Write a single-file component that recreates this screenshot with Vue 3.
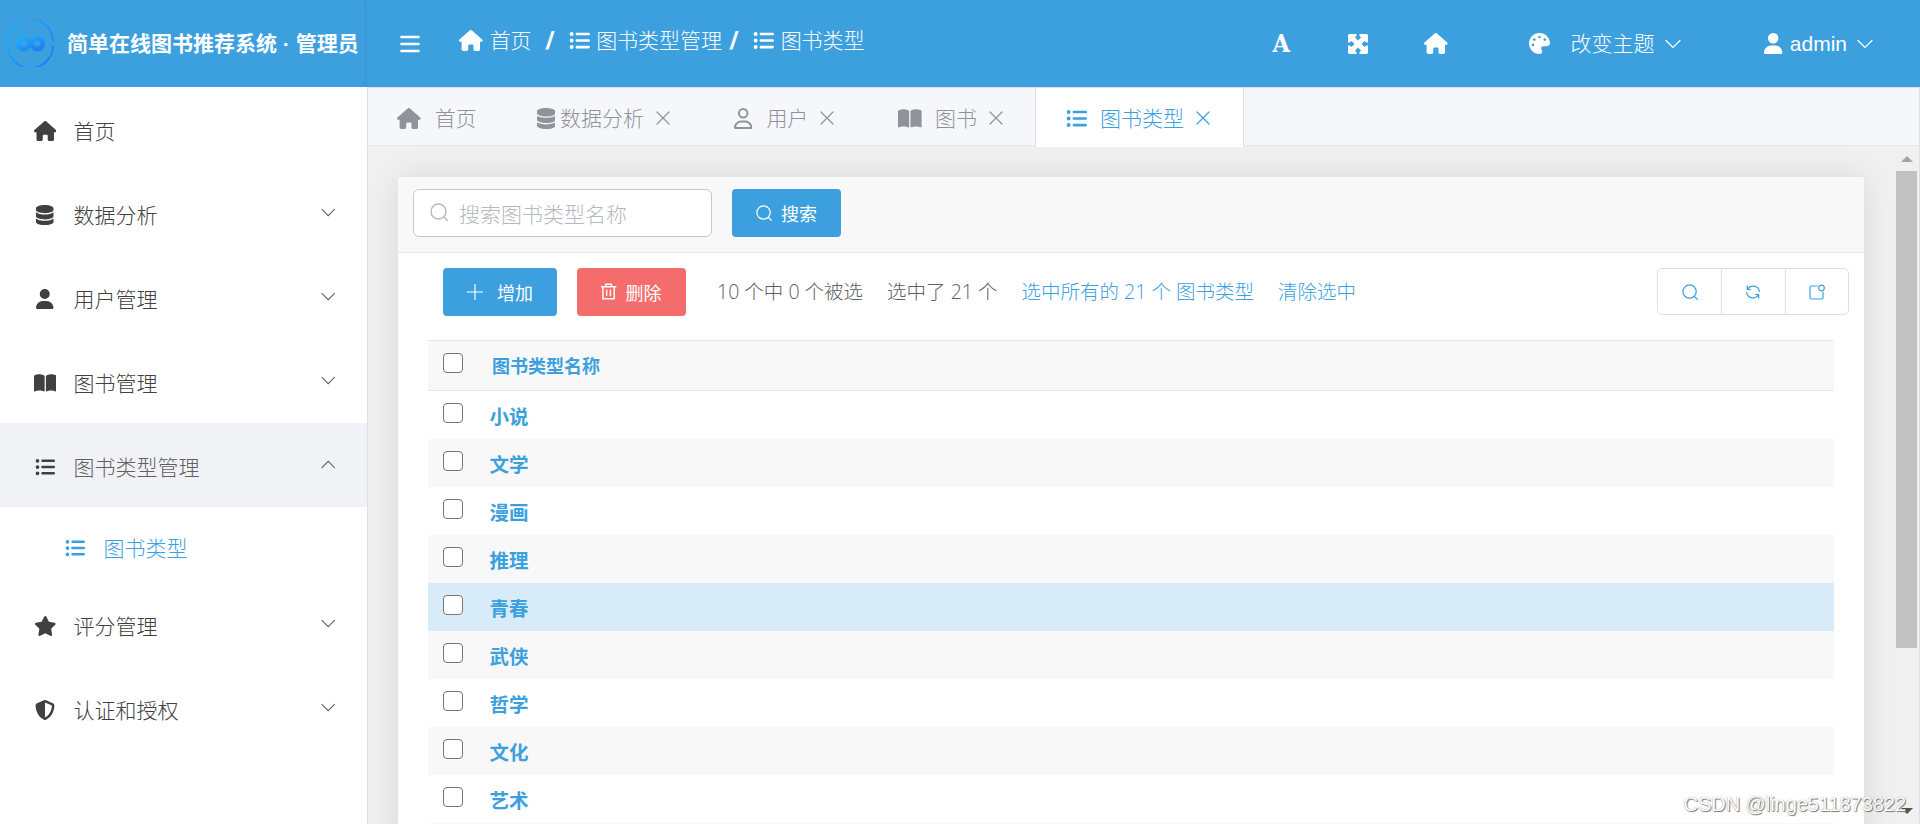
<template>
    <div class="app">
        <aside class="sidebar">
            <div class="brand">
                <svg class="logo" viewBox="0 0 46 46">
                    <defs>
                        <linearGradient id="brand-gradient" x1="0" y1="0" x2="1" y2="1">
                            <stop offset="0" stop-color="#1cb2f8" />
                            <stop offset="1" stop-color="#1e7bf5" />
                        </linearGradient>
                    </defs>
                    <g fill="none" stroke="url(#brand-gradient)">
                        <path d="M1 21a22 22 0 0 1 44 0M1 25a22 22 0 0 0 44 0" stroke-width="2" />
                        <path
                            d="M23 23c-2.6-3.6-4.3-5.5-6.5-5.5a5.500 5.500 0 0 0 0 11c2.600 0 4.300-2.400 6.500-5.500s4-5.500 6.500-5.500a5.500 5.500 0 0 1 0 11c-2.300 0-4-1.900-6.500-5.500"
                            stroke-width="4.600"
                        />
                    </g>
                </svg>
                <span class="brand-name">简单在线图书推荐系统 · 管理员</span>
            </div>
            <nav class="menu">
                <template v-for="item in menus" :key="item.name">
                    <div class="menu-item" :class="{ opened: item.children }">
                        <span class="menu-icon"><Icon :name="item.icon" /></span>
                        <span>{{ item.name }}</span>
                        <Icon v-if="item.arrow" class="menu-arrow" :name="item.children ? 'up' : 'down'" />
                    </div>
                    <div v-for="child in item.children" :key="child.name" class="menu-item sub-item">
                        <span class="menu-icon"><Icon :name="child.icon" /></span>
                        <span>{{ child.name }}</span>
                    </div>
                </template>
            </nav>
        </aside>

        <section class="main">
            <header class="navbar">
                <Icon class="hamburger" name="bars" />
                <div class="breadcrumb">
                    <Icon name="home" />
                    <span class="crumb first">首页</span>
                    <b class="slash wide">/</b>
                    <Icon name="list" />
                    <span class="crumb">图书类型管理</span>
                    <b class="slash">/</b>
                    <Icon name="list" />
                    <span class="crumb">图书类型</span>
                </div>
                <div class="nav-tools">
                    <span class="tool-font">A</span>
                    <Icon class="tool-expand" name="expand" />
                    <Icon class="tool-home" name="home" />
                    <Icon class="tool-theme" name="palette" />
                    <span class="theme-text">改变主题</span>
                    <Icon class="nav-arrow" name="down" />
                    <Icon class="tool-user" name="user" />
                    <span class="user-name">admin</span>
                    <Icon class="nav-arrow" name="down" />
                </div>
            </header>

            <div class="tabs">
                <div
                    v-for="tab in tabs"
                    :key="tab.name"
                    class="tab"
                    :class="{ active: tab.active, tight: tab.icon === 'database' }"
                >
                    <Icon :name="tab.icon" />
                    <span class="tab-name">{{ tab.name }}</span>
                    <Icon v-if="tab.closable" class="tab-close" name="close" />
                </div>
            </div>

            <div class="content">
                <div class="card">
                    <div class="search-bar">
                        <div class="search-input">
                            <Icon name="search" />
                            <span>搜索图书类型名称</span>
                        </div>
                        <button class="btn primary"><Icon name="search" /><span>搜索</span></button>
                    </div>

                    <div class="toolbar">
                        <button class="btn primary add"><Icon name="plus" /><span>增加</span></button>
                        <button class="btn danger"><Icon name="trash" /><span>删除</span></button>
                        <div class="selection">
                            <span>10 个中 0 个被选</span>
                            <span>选中了 21 个</span>
                            <a>选中所有的 21 个 图书类型</a>
                            <a>清除选中</a>
                        </div>
                        <div class="btn-group">
                            <span><Icon name="search" /></span>
                            <span><Icon name="refresh" /></span>
                            <span><Icon name="badge" /></span>
                        </div>
                    </div>

                    <div class="table">
                        <div class="row head">
                            <i class="checkbox"></i>
                            <span>图书类型名称</span>
                        </div>
                        <div v-for="name in rows" :key="name" class="row" :class="{ hover: name === hovered }">
                            <i class="checkbox"></i>
                            <span>{{ name }}</span>
                        </div>
                        <div class="row"></div>
                    </div>
                </div>

                <div class="scrollbar">
                    <i class="scroll-up"></i>
                    <i class="scroll-thumb"></i>
                    <i class="scroll-down"></i>
                </div>
            </div>
        </section>

        <div class="watermark">CSDN @linge511873822</div>
    </div>
</template>

<script setup>
import { h } from "vue";

// [viewBox width, viewBox height, path, stroke width]; no stroke width means a filled icon
const icons = {
    home: [576, 512, "M575.8 255.5c0 18-15 32.1-32 32.1h-32l.7 160.2c0 2.7-.2 5.4-.5 8.1V472c0 22.1-17.9 40-40 40H392c-22.1 0-40-17.9-40-40V384c0-17.700-14.300-32-32-32H256c-17.700 0-32 14.300-32 32v88c0 22.100-17.900 40-40 40H104c-22.100 0-40-17.900-40-40V287.600H32c-18 0-32-14-32-32.100c0-9 3-17 10-24L266.400 8c7-7 15-8 22-8s15 2 21 7L564.800 231.500c8 7 12 15 11 24z"],
    database: [448, 512, "M448 80v48c0 44.200-100.300 80-224 80S0 172.200 0 128V80C0 35.800 100.300 0 224 0S448 35.800 448 80zM393.200 214.700c20.800-7.400 39.900-16.900 54.800-28.600V288c0 44.200-100.300 80-224 80S0 332.200 0 288V186.100c14.900 11.800 34 21.200 54.800 28.600C99.700 230.700 159.500 240 224 240s124.300-9.300 169.200-25.300zM0 346.100c14.900 11.800 34 21.200 54.800 28.600C99.700 390.700 159.500 400 224 400s124.300-9.300 169.200-25.300c20.800-7.400 39.900-16.900 54.800-28.600V432c0 44.200-100.300 80-224 80S0 476.200 0 432V346.100z"],
    user: [448, 512, "M224 256A128 128 0 1 0 224 0a128 128 0 1 0 0 256zm-45.700 48C79.800 304 0 383.800 0 482.300C0 498.700 13.300 512 29.700 512H418.300c16.400 0 29.700-13.300 29.700-29.700C448 383.800 368.200 304 269.700 304H178.300z"],
    userLine: [448, 512, "M304 128a80 80 0 1 0 -160 0 80 80 0 1 0 160 0zM96 128a128 128 0 1 1 256 0A128 128 0 1 1 96 128zM49.300 464H398.700c-8.900-63.300-63.300-112-129-112H178.300c-65.700 0-120.100 48.700-129 112zM0 482.300C0 383.800 79.800 304 178.300 304h91.400C368.200 304 448 383.800 448 482.300c0 16.400-13.300 29.700-29.700 29.700H29.700C13.300 512 0 498.700 0 482.300z"],
    book: [576, 512, "M249.600 471.500c10.800 3.800 22.400-4.100 22.400-15.500V78.600c0-4.200-1.600-8.400-5-11C247.400 52 202.400 32 144 32C93.500 32 46.300 45.300 18.100 56.100C6.800 60.500 0 71.700 0 83.800V454.100c0 11.900 12.800 20.200 24.100 16.500C55.600 460.100 105.500 448 144 448c33.900 0 79 14 105.600 23.500zm76.800 0C353 462 398.100 448 432 448c38.500 0 88.400 12.100 119.900 22.600c11.300 3.800 24.100-4.600 24.100-16.500V83.800c0-12.100-6.800-23.300-18.100-27.600C529.700 45.300 482.500 32 432 32c-58.400 0-103.400 20-123 35.600c-3.300 2.600-5 6.800-5 11V456c0 11.400 11.700 19.300 22.400 15.500z"],
    list: [512, 512, "M64 144a48 48 0 1 0 0-96 48 48 0 1 0 0 96zM64 304a48 48 0 1 0 0-96 48 48 0 1 0 0 96zM64 464a48 48 0 1 0 0-96 48 48 0 1 0 0 96zM192 64a32 32 0 0 0 0 64H480a32 32 0 0 0 0-64zM192 224a32 32 0 0 0 0 64H480a32 32 0 0 0 0-64zM192 384a32 32 0 0 0 0 64H480a32 32 0 0 0 0-64z"],
    star: [576, 512, "M316.900 18C311.600 7 300.400 0 288.100 0s-23.400 7-28.800 18L195 150.300 51.400 171.500c-12 1.800-22 10.200-25.700 21.700s-.7 24.200 7.900 32.700L137.800 329 113.200 474.700c-2 12 3 24.200 12.900 31.300s23 8 33.800 2.300l128.300-68.500 128.300 68.500c10.800 5.700 23.900 4.900 33.800-2.300s14.900-19.300 12.900-31.300L438.500 329 542.700 225.900c8.600-8.500 11.700-21.200 7.900-32.700s-13.700-19.900-25.700-21.700L381.200 150.300 316.900 18z"],
    shield: [512, 512, "M256 0c4.600 0 9.200 1 13.400 2.900L457.700 82.800c22 9.300 38.400 31 38.300 57.200c-.5 99.200-41.300 280.700-213.600 363.200c-16.700 8-36.100 8-52.800 0C57.300 420.700 16.500 239.200 16 140c-.1-26.200 16.300-47.900 38.300-57.200L242.700 2.900C246.800 1 251.400 0 256 0zm0 66.800V444.800C394 378 431.100 230.100 432 141.400L256 66.800z"],
    palette: [512, 512, "M512 256c0 .9 0 1.800 0 2.700c-.4 36.500-33.600 61.300-70.100 61.300H344c-26.500 0-48 21.500-48 48c0 3.400 .4 6.700 1 9.900c2.100 10.200 6.500 20 10.800 29.900c6.100 13.800 12.100 27.500 12.100 42c0 31.800-21.600 60.700-53.400 62c-3.500 .1-7 .2-10.600 .2C114.600 512 0 397.400 0 256S114.600 0 256 0S512 114.600 512 256zM128 288a32 32 0 1 0 -64 0 32 32 0 1 0 64 0zm0-96a32 32 0 1 0 0-64 32 32 0 1 0 0 64zM288 96a32 32 0 1 0 -64 0 32 32 0 1 0 64 0zm96 96a32 32 0 1 0 0-64 32 32 0 1 0 0 64z"],
    expand: [20, 20, "M1 0H8.500V1.500L7 3.500 10 6.500 13 3.500 11.500 1.500V0H19L20 1V8.500H18.500L16.500 7 13.500 10 16.500 13 18.500 11.500H20V19L19 20H11.500V18.500L13 16.500 10 13.500 7 16.500 8.500 18.500V20H1L0 19V11.500H1.500L3.500 13 6.500 10 3.500 7 1.500 8.500H0V1Z"],
    bars: [20, 18, "M1.500 2H18.500M1.500 9H18.500M1.500 16H18.500", 2.6],
    down: [16, 10, "M1 1.500 8 8.500 15 1.500", 1.2],
    up: [16, 10, "M1 8.500 8 1.500 15 8.500", 1.2],
    close: [14, 14, "M1 1 13 13M13 1 1 13", 1.2],
    search: [18, 18, "M16 8.500a7.500 7.500 0 1 1-15 0a7.500 7.500 0 1 1 15 0M14 14 17.300 17.300", 1.4],
    plus: [16, 16, "M8 .5V15.500M.5 8H15.500", 1.2],
    trash: [16, 18, "M.3 4H15.700M5 4V1.300H11V4M2 4V16.700H14V4M6 7.500V13.200M10 7.500V13.200", 1.5],
    refresh: [16, 16, "M2.300 2V5.500H5.500M2.600 5.200A6.400 6.400 0 0 1 14.400 7.300M13.700 14V10.500H10.500M13.400 10.800A6.400 6.400 0 0 1 1.600 8.700", 1.2],
    badge: [16, 16, "M8.500 2H2.200Q1 2 1 3.200V13.800Q1 15 2.200 15H12.800Q14 15 14 13.800V8M15.300 4a2.800 2.800 0 1 1-5.600 0a2.800 2.800 0 1 1 5.600 0", 1.2],
};

const Icon = ({ name }) => {
    const [w, height, d, line] = icons[name];
    const paint = line
        ? { fill: "none", stroke: "currentColor", "stroke-width": line, "stroke-linecap": "round" }
        : { fill: "currentColor" };
    return h("svg", { class: "icon", viewBox: `0 0 ${w} ${height}` }, [h("path", { d, ...paint })]);
};
Icon.props = ["name"];

const menus = [
    { name: "首页", icon: "home" },
    { name: "数据分析", icon: "database", arrow: true },
    { name: "用户管理", icon: "user", arrow: true },
    { name: "图书管理", icon: "book", arrow: true },
    {
        name: "图书类型管理",
        icon: "list",
        arrow: true,
        children: [{ name: "图书类型", icon: "list" }],
    },
    { name: "评分管理", icon: "star", arrow: true },
    { name: "认证和授权", icon: "shield", arrow: true },
];

const tabs = [
    { name: "首页", icon: "home" },
    { name: "数据分析", icon: "database", closable: true },
    { name: "用户", icon: "userLine", closable: true },
    { name: "图书", icon: "book", closable: true },
    { name: "图书类型", icon: "list", closable: true, active: true },
];

const rows = ["小说", "文学", "漫画", "推理", "青春", "武侠", "哲学", "文化", "艺术"];
const hovered = "青春";
</script>

<style>
body {
    margin: 0;
    overflow: hidden;
}
</style>

<style scoped>
.app {
    display: flex;
    height: 824px;
    overflow: hidden;
    background: #f0f0f0;
    font-family: "Liberation Sans", "Noto Sans CJK SC", sans-serif;
    font-size: 21px;
    font-weight: 300;
    line-height: 1;
    white-space: nowrap;
    color: #303133;
}

.icon {
    display: block;
    flex: none;
    height: 21px;
    width: auto;
}

/* sidebar */
.sidebar {
    flex: none;
    width: 367px;
    background: #fff;
}

.brand {
    display: flex;
    align-items: center;
    height: 87px;
    box-sizing: border-box;
    padding-left: 7px;
    color: #fff;
    background: #3ca0df;
    box-shadow: inset -4px 0 4px -3px rgba(0, 0, 0, 0.08);
}

.logo {
    flex: none;
    width: 47px;
    height: 47px;
    margin-right: 13px;
}

.brand-name {
    font-weight: 700;
}

.menu-item {
    display: flex;
    align-items: center;
    height: 84px;
    box-sizing: border-box;
    padding: 4px 32px 0 30px;
    color: #404040;
}

.menu-icon {
    display: flex;
    justify-content: center;
    width: 30px;
    margin-right: 13.5px;
}

.menu-icon .icon {
    height: 20px;
}

.menu-arrow {
    height: 9px;
    margin: 0 0 6px auto;
    color: #606060;
}

.menu-item.opened {
    background: #f1f2f6;
    color: #606060;
}

.menu-item.opened .menu-icon {
    color: #404040;
}

.menu-item.sub-item {
    height: 75px;
    padding-top: 7px;
    padding-left: 60px;
    color: #3ca0df;
}

/* top bar */
.main {
    flex: 1;
    min-width: 0;
    display: flex;
    flex-direction: column;
}

.navbar {
    flex: none;
    display: flex;
    align-items: center;
    height: 87px;
    box-sizing: border-box;
    padding: 0 47px 0 33px;
    color: #fff;
    background: #3ca0df;
}

.hamburger {
    height: 18px;
}

.breadcrumb {
    display: flex;
    align-items: center;
    margin: 0 auto 6px 39px;
}

.crumb {
    margin-left: 6.5px;
}

.crumb.first {
    margin-left: 7px;
}

.slash {
    width: 12px;
    margin: 0 13px 0 6px;
    font-weight: 700;
    font-size: 25px;
    text-align: center;
    transform: skewX(-8deg);
}

.slash.wide {
    margin-left: 12px;
}

.nav-tools {
    display: flex;
    align-items: center;
}

.tool-font {
    width: 20px;
    font: 700 25px/1 "DejaVu Serif Condensed", "DejaVu Serif", serif;
    font-stretch: condensed;
    text-align: center;
}

.tool-expand {
    height: 20px;
    margin-left: 57px;
}

.tool-home {
    margin-left: 56px;
}

.tool-theme {
    margin: 0 20px 0 81.5px;
}

.nav-arrow {
    height: 10px;
    margin-left: 10px;
}

.theme-text {
    margin-right: 1px;
}

.tool-user {
    margin: 0 7px 0 83px;
}

/* tabs */
.tabs {
    flex: none;
    display: flex;
    height: 59px;
    box-sizing: border-box;
    border: 1px solid #dcdfe6;
    border-bottom-color: #e4e7ed;
    background: #f5f7fb;
}

.tab {
    display: flex;
    align-items: center;
    height: 59px;
    box-sizing: border-box;
    padding: 1px 33px 0 29px;
    border: solid transparent;
    border-width: 0 1px;
    color: #909399;
}

.tab:first-child {
    padding-right: 29px;
    padding-left: 28px;
}

.tab-name {
    margin-left: 14px;
}

.tab:nth-child(n + 4) .tab-name {
    margin-left: 13px;
}

.tab.tight .tab-name {
    margin-left: 5px;
}

.tab.active {
    position: relative;
    margin-left: -2px;
    padding-left: 30px;
    color: #3ca0df;
    background: #fff;
    border-color: #dcdfe6;
}

.tab-close {
    height: 14px;
    margin-left: 12px;
}

/* content */
.content {
    flex: 1;
    min-height: 0;
    display: flex;
    box-sizing: border-box;
    padding: 0 2px 0 30px;
    overflow: hidden;
    border: solid #dcdfe6;
    border-width: 0 1px;
}

.card {
    flex: 1;
    margin: 31px 32px -30px 0;
    background: #fff;
    box-shadow: 0 0 30px rgba(0, 0, 0, 0.1);
}

.search-bar {
    display: flex;
    height: 76px;
    box-sizing: border-box;
    padding: 12px 15px;
    gap: 20px;
    background: #f8f8f8;
    border-bottom: 1px solid #e6e6e6;
}

.search-input {
    display: flex;
    align-items: center;
    gap: 11px;
    width: 299px;
    height: 48px;
    box-sizing: border-box;
    padding: 2px 16px 0;
    border: 1px solid #c8c8c8;
    border-radius: 6px;
    background: #fff;
    color: #b4b8c0;
}

.search-input .icon {
    height: 18px;
    margin-bottom: 4px;
}

.btn {
    display: flex;
    align-items: center;
    justify-content: center;
    gap: 9px;
    width: 109px;
    height: 48px;
    padding: 0 0 1px;
    border: none;
    border-radius: 4px;
    color: #fff;
    font: 400 18px/1 "Noto Sans CJK SC", sans-serif;
}

.btn .icon {
    height: 16px;
}

.btn.primary {
    background: #3ca0df;
}

.btn.danger {
    background: #f56c6c;
}

.btn.danger .icon {
    height: 17px;
}

.btn.add {
    width: 114px;
    gap: 14px;
}

.toolbar {
    display: flex;
    gap: 20px;
    padding: 15px 15px 24px 45px;
}

.selection {
    display: flex;
    align-items: center;
    gap: 24px;
    height: 48px;
    margin-left: 11px;
    font-family: "Open Sans", "Noto Sans CJK SC", sans-serif;
    font-size: 19.5px;
    color: #606060;
}

.selection a {
    color: #3ca0df;
}

.btn-group {
    display: flex;
    height: 47px;
    box-sizing: border-box;
    margin-left: auto;
    border: 1px solid #dcdfe6;
    border-radius: 5px;
    color: #3ca0df;
}

.btn-group span {
    display: flex;
    align-items: center;
    justify-content: center;
    width: 63px;
    box-sizing: border-box;
}

.btn-group span + span {
    width: 63.5px;
    border-left: 1px solid #dcdfe6;
}

.btn-group .icon {
    height: 16px;
}

/* table */
.table {
    margin: 0 30px;
    color: #3ca0df;
    font-family: "Noto Sans CJK SC", sans-serif;
    font-size: 19.5px;
    font-weight: 700;
}

.row {
    display: flex;
    height: 48px;
    box-sizing: border-box;
    padding: 15px 15px 0;
}

.row span {
    margin-left: 26.5px;
}

.row:nth-child(odd) {
    background: #f8f8f8;
}

.row.hover {
    background: #d8ebf9;
}

.row.head {
    height: 51px;
    border: solid #e6e6e6;
    border-width: 1px 0;
    font-size: 18px;
}

.row.head span {
    margin-left: 29px;
}

.checkbox {
    width: 20px;
    height: 20px;
    box-sizing: border-box;
    margin-top: -3px;
    border: 1.5px solid #767676;
    border-radius: 4px;
    background: #fff;
}

/* scrollbar */
.scrollbar {
    flex: none;
    display: flex;
    flex-direction: column;
    align-items: center;
    width: 21px;
    padding: 10px 0;
    box-sizing: border-box;
}

.scroll-up,
.scroll-down {
    border: solid transparent;
    border-width: 0 6px 6px;
    border-bottom-color: #a3a3a3;
}

.scroll-thumb {
    width: 21px;
    height: 477px;
    margin: 9px 0 auto;
    background: #c1c1c1;
}

.scroll-down {
    border-width: 6px 6px 0;
    border-top-color: #505050;
}

.watermark {
    position: absolute;
    right: 14px;
    bottom: 10px;
    font: 400 20px/1 "Liberation Sans", sans-serif;
    letter-spacing: -0.05px;
    color: #fff;
    text-shadow: 1px 1px 1px #777, 0 0 1px #888;
}
</style>
